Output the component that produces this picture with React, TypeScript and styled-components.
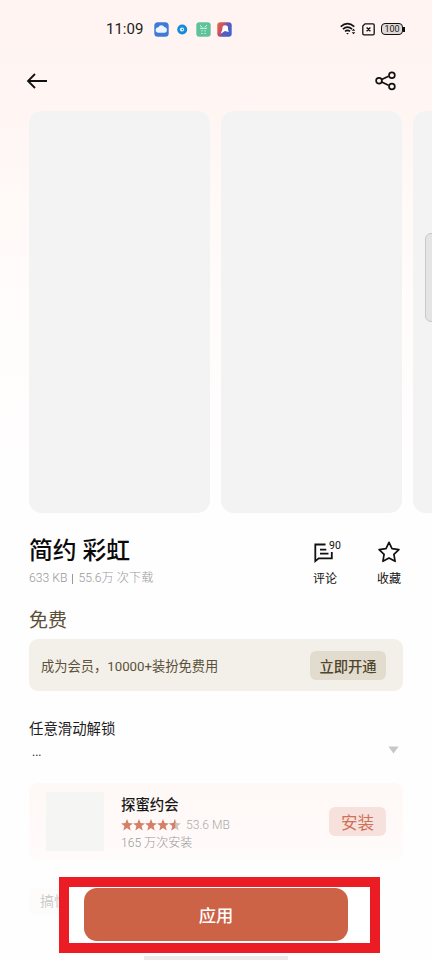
import React from 'react';
import styled, { createGlobalStyle } from 'styled-components';

const GlobalStyle = createGlobalStyle`
  * { box-sizing: border-box; }
  body {
    margin: 0;
    background: #fffefe;
    font-family: Roboto, "Noto Sans CJK SC", sans-serif;
    overflow: hidden;
  }
  svg { display: block; flex: none; }
`;

const Screen = styled.main`
  position: relative;
  display: flex;
  flex-direction: column;
  width: 432px;
  height: 960px;
  overflow: hidden;
  background: linear-gradient(#fff4f2 0, #fff5f3 90px, #fffcfb 300px, #fffefe 480px, #fffefe 100%);
`;

const StatusBar = styled.header`
  display: flex;
  align-items: center;
  height: 58px;
  padding: 0 27px 0 106px;
`;

const Clock = styled.time`
  width: 48px;
  font: 400 15px/20px Roboto, sans-serif;
  color: #222;
  white-space: nowrap;
`;

const Notices = styled.div`
  display: flex;
  flex: 1;
  gap: 6px;
`;

const SystemIcons = styled.div`
  display: flex;
  align-items: center;
  gap: 5px;
`;

const Battery = styled.span`
  display: flex;
  align-items: center;
  margin-left: 1px;
`;

const BatteryBody = styled.span`
  width: 22px;
  height: 12px;
  border: 1.4px solid #111;
  border-radius: 4px;
  background: #dedad9;
  font-size: 9px;
  line-height: 11px;
  text-align: center;
  color: #222;
`;

const BatteryTip = styled.span`
  width: 2px;
  height: 5px;
  background: #111;
`;

const NavBar = styled.nav`
  display: flex;
  align-items: center;
  justify-content: space-between;
  height: 46px;
  padding: 0 35px 0 26px;
`;

const Gallery = styled.section`
  display: flex;
  gap: 11px;
  margin-top: 7px;
  padding-left: 29px;
`;

const Preview = styled.div`
  flex: none;
  width: 181px;
  height: 402px;
  border-radius: 13px;
  background: #f3f3f3;
`;

const Content = styled.div`
  display: flex;
  flex-direction: column;
  padding: 21px 29px 0;
`;

const Summary = styled.section`
  display: flex;
  justify-content: space-between;
  height: 71px;
`;

const Title = styled.h1`
  margin: 0;
  font-size: 23.8px;
  font-weight: 500;
  line-height: 35px;
  color: #0a0a0a;
  white-space: nowrap;
`;

const Meta = styled.p`
  display: flex;
  align-items: center;
  gap: 5px;
  margin: 0;
  font-size: 12.2px;
  font-weight: 300;
  line-height: 19px;
  color: #999;
  white-space: nowrap;
`;

const MetaRule = styled.i`
  width: 1px;
  height: 10px;
  background: #999;
`;

const Actions = styled.div`
  display: flex;
  gap: 38px;
  padding: 6px 1px 0 0;
`;

const Action = styled.div`
  position: relative;
  display: flex;
  flex-direction: column;
  align-items: center;
  width: 26px;
  gap: 6px;
  font-size: 12px;
  line-height: 18px;
  color: #111;
  white-space: nowrap;
`;

const Count = styled.span`
  position: absolute;
  top: -1px;
  left: 17px;
  font-size: 10.5px;
  line-height: 14px;
`;

const Price = styled.h2`
  margin: 0;
  height: 34px;
  font-size: 19px;
  font-weight: 400;
  line-height: 32px;
  color: #5b5039;
`;

const MemberCard = styled.section`
  display: flex;
  align-items: center;
  justify-content: space-between;
  width: 374px;
  height: 52px;
  padding: 0 17px 0 12px;
  border-radius: 9px;
  background: #f3f0e9;
  font-size: 13.25px;
  color: #5a503b;
`;

const SmallButton = styled.button<{ $tone: 'sand' | 'rose' }>`
  flex: none;
  width: ${p => (p.$tone === 'sand' ? 76 : 57)}px;
  height: 29px;
  padding: 0;
  border: 0;
  border-radius: 6px;
  font-family: inherit;
  font-weight: ${p => (p.$tone === 'sand' ? 500 : 400)};
  font-size: ${p => (p.$tone === 'sand' ? 14.3 : 16.5)}px;
  background: ${p => (p.$tone === 'sand' ? '#e2dccf' : '#f7e1dd')};
  color: ${p => (p.$tone === 'sand' ? '#4f452d' : '#cf7158')};
`;

const Feature = styled.section`
  display: flex;
  align-items: flex-end;
  justify-content: space-between;
  width: 374px;
  height: 71px;
  margin-top: 21px;
  padding-right: 4px;
`;

const FeatureText = styled.div`
  display: flex;
  flex-direction: column;
  align-self: flex-start;
  gap: 2px;
  padding-top: 8px;
  font-size: 14.4px;
  line-height: 20px;
  color: #1c1c1c;
`;

const Ellipsis = styled.span`
  padding-left: 3px;
  font-size: 12px;
`;

const Caret = styled.svg`
  margin-bottom: 29px;
`;

const AppCard = styled.section`
  display: flex;
  align-items: center;
  width: 374px;
  height: 77px;
  padding: 0 17px;
  border-radius: 9px;
  background: linear-gradient(#fef8f6, #fffbfa);
`;

const AppIcon = styled.div`
  width: 58px;
  height: 59px;
  margin-right: 17px;
  background: #f5f5f4;
`;

const AppInfo = styled.div`
  flex: 1;
  padding-top: 4px;
  font-size: 12.1px;
  font-weight: 300;
  line-height: 18px;
  color: #999;
`;

const AppName = styled.h3`
  margin: 0;
  font-size: 14.4px;
  font-weight: 500;
  line-height: 20px;
  color: #191919;
`;

const Rating = styled.div`
  display: flex;
  align-items: center;
  gap: 5px;
  color: #aaa;
`;

const Tag = styled.span`
  align-self: flex-start;
  height: 27px;
  margin-top: 28px;
  padding: 0 11px;
  border-radius: 5px;
  background: #fdfcfb;
  font-size: 14px;
  line-height: 27px;
  color: #ccc;
`;

const Highlight = styled.div`
  position: absolute;
  left: 59px;
  top: 877px;
  width: 321px;
  height: 76px;
  padding: 1px 22px 2px 15px;
  border: 10px solid #ec1c24;
  background: #fff;
`;

const ApplyButton = styled.button`
  display: block;
  width: 264px;
  height: 53px;
  padding: 0;
  border: 0;
  border-radius: 13px;
  background: #cc6246;
  color: #fff;
  font-family: inherit;
  font-size: 17.3px;
  font-weight: 500;
`;

const SideHandle = styled.div`
  position: absolute;
  left: 425px;
  top: 233px;
  width: 14px;
  height: 89px;
  border: 1px solid #c9c9c9;
  border-radius: 6px;
  background: #e4e4e4;
`;

const HomeIndicator = styled.div`
  position: absolute;
  left: 144px;
  top: 956px;
  width: 144px;
  height: 4px;
  background: #ece9e9;
`;

const STAR = 'M6 .1 7.6 4.1 11.9 4.4 8.6 7.1 9.7 11.4 6 9.1 2.3 11.4 3.4 7.1.1 4.4 4.4 4.1Z';

const Stars = () => (
  <svg width="60" height="12" viewBox="0 0 60 12">
    <defs>
      <clipPath id="half"><rect width="6.2" height="12" /></clipPath>
    </defs>
    {[0, 1, 2, 3, 4].map(i => (
      <g key={i} transform={`translate(${i * 12} 0)`}>
        <path d={STAR} fill={i < 4 ? '#d47f66' : '#c9c4c1'} />
        {i === 4 && <path d={STAR} fill="#d47f66" clipPath="url(#half)" />}
      </g>
    ))}
  </svg>
);

const NoticeIcons = () => (
  <Notices>
    <svg width="15" height="15" viewBox="0 0 15 15">
      <rect x=".3" y=".3" width="14.4" height="14.4" rx="3.5" fill="#3e7bd9" />
      <path d="M4.6 10.8a2.8 2.8 0 0 1-.2-5.6 3.4 3.4 0 0 1 5.9-.3 3 3 0 0 1 .4 5.9Z" fill="#eef5ff" />
    </svg>
    <svg width="15" height="15" viewBox="0 0 15 15">
      <circle cx="7.2" cy="7.5" r="5" fill="#158bdb" />
      <circle cx="7" cy="7.5" r="2.1" fill="#e8f6ff" />
      <circle cx="7.4" cy="7.5" r=".8" fill="#1774bd" />
    </svg>
    <svg width="15" height="15" viewBox="0 0 15 15">
      <rect x=".3" y=".3" width="14.4" height="14.4" rx="3" fill="#5fc29a" />
      <path d="M4.2 3.2 6 5.3M10.8 3.2 9 5.3M4 6.3h7M5.3 8.8h1.4M8.4 8.8h1.4M5.3 11.4h1.4M8.4 11.4h1.4" stroke="#e3fff2" strokeWidth=".9" />
    </svg>
    <svg width="15" height="15" viewBox="0 0 15 15">
      <defs>
        <linearGradient id="tile" x1="0" y1="0" x2="1" y2=".5">
          <stop offset="0" stopColor="#db7040" />
          <stop offset=".4" stopColor="#cf505c" />
          <stop offset=".65" stopColor="#6058ba" />
          <stop offset="1" stopColor="#3f62cf" />
        </linearGradient>
      </defs>
      <rect x=".3" y=".3" width="14.4" height="14.4" rx="3" fill="url(#tile)" />
      <circle cx="8.2" cy="6" r="2.8" fill="#fff" />
      <path d="M5.8 6.5 3.6 11.8 8 9l3.8 1-1.2-4Z" fill="#fff" />
    </svg>
  </Notices>
);

const App = () => (
  <>
    <GlobalStyle />
    <Screen>
      <StatusBar>
        <Clock>11:09</Clock>
        <NoticeIcons />
        <SystemIcons>
          <svg width="17" height="14" viewBox="0 0 17 14" fill="none" stroke="#111" strokeWidth="1.6">
            <path d="M.7 4.6Q7.5-1.2 14.3 4.6M2.9 7.1Q7.5 3.2 12.1 7.1M5 9.4Q7.5 7.3 10 9.4" />
            <path d="m6.2 11 1.3 1.6L8.8 11Z" fill="#111" stroke="none" />
            <path d="m11.7 8.8 1.8-2 1.8 2ZM11.7 10.3l1.8 2 1.8-2Z" fill="#111" stroke="none" />
          </svg>
          <svg width="13" height="13" viewBox="0 0 13 13" fill="none" stroke="#111" strokeWidth="1.3">
            <path d="M3 .8h8q1.2 0 1.2 1.2v8.6q0 1.2-1.2 1.2H2Q.8 11.8.8 10.6V3ZM4.6 4.5l3.8 3.8M8.4 4.5 4.6 8.3" />
          </svg>
          <Battery><BatteryBody>100</BatteryBody><BatteryTip /></Battery>
        </SystemIcons>
      </StatusBar>

      <NavBar>
        <svg width="22" height="18" viewBox="0 0 22 18" fill="none" stroke="#111" strokeWidth="1.8">
          <path d="M21 9H2M9 2 2 9l7 7" />
        </svg>
        <svg width="22" height="20" viewBox="0 0 22 20" fill="none" stroke="#111" strokeWidth="1.7">
          <path d="m6.7 8.6 6.8-3.4M6.7 10.9l6.8 3.4" />
          <circle cx="4" cy="9.8" r="2.9" />
          <circle cx="16.9" cy="4.2" r="2.9" />
          <circle cx="16.9" cy="15.5" r="2.9" />
        </svg>
      </NavBar>

      <Gallery>
        <Preview />
        <Preview />
        <Preview />
      </Gallery>

      <Content>
        <Summary>
          <div>
            <Title>简约 彩虹</Title>
            <Meta>633 KB<MetaRule />55.6万 次下载</Meta>
          </div>
          <Actions>
            <Action>
              <svg width="24" height="24" viewBox="0 0 24 24" fill="none" stroke="#111" strokeWidth="1.8">
                <path d="M12.5 4.5H2.3v16.6l3.4-2.8h13.1V12M7 9.6h6.3M7 13.6h8.5" />
              </svg>
              <Count>90</Count>
              评论
            </Action>
            <Action>
              <svg width="24" height="24" viewBox="0 0 24 24" fill="none" stroke="#111" strokeWidth="1.7" strokeLinejoin="round">
                <path d="m12 2.3 3 6.3 6.9 1-5 4.8 1.2 6.9-6.1-3.3-6.1 3.3 1.2-6.9-5-4.8 6.9-1Z" />
              </svg>
              收藏
            </Action>
          </Actions>
        </Summary>

        <Price>免费</Price>
        <MemberCard>
          <span>成为会员，10000+装扮免费用</span>
          <SmallButton $tone="sand">立即开通</SmallButton>
        </MemberCard>

        <Feature>
          <FeatureText>
            任意滑动解锁
            <Ellipsis>...</Ellipsis>
          </FeatureText>
          <Caret width="11" height="8" viewBox="0 0 11 8"><path d="M.3.5h10.4L5.5 7.5Z" fill="#c8c8c8" /></Caret>
        </Feature>

        <AppCard>
          <AppIcon />
          <AppInfo>
            <AppName>探蜜约会</AppName>
            <Rating><Stars />53.6 MB</Rating>
            <div>165 万次安装</div>
          </AppInfo>
          <SmallButton $tone="rose">安装</SmallButton>
        </AppCard>
        <Tag>搞怪</Tag>
      </Content>

      <SideHandle />
      <Highlight><ApplyButton>应用</ApplyButton></Highlight>
      <HomeIndicator />
    </Screen>
  </>
);

export default App;
